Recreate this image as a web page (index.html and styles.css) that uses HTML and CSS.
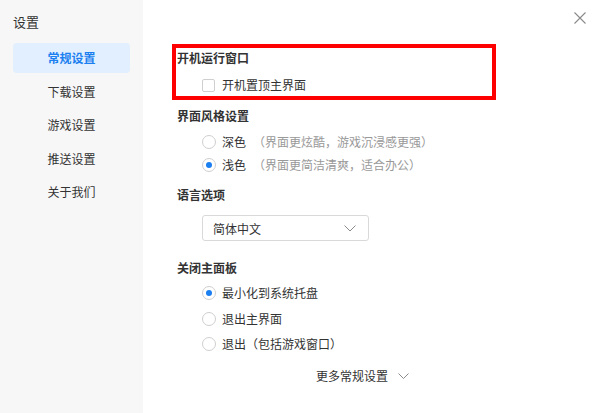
FILE: index.html
```html
<!DOCTYPE html>
<html lang="zh-CN">
  <head>
    <meta charset="UTF-8" />
    <meta name="viewport" content="width=device-width, initial-scale=1.0" />
    <title>设置</title>
    <link rel="stylesheet" href="styles.css">
  </head>
  <body>
    <aside class="sidebar">
      <h1 class="sidebar-title">设置</h1>
      <nav class="menu">
        <a class="menu-item valgt">常规设置</a>
        <a class="menu-item">下载设置</a>
        <a class="menu-item">游戏设置</a>
        <a class="menu-item">推送设置</a>
        <a class="menu-item">关于我们</a>
      </nav>
    </aside>

    <main class="content">
      <button class="close" aria-label="关闭">
        <svg width="12" height="12" viewBox="0 0 12 12">
          <path d="M0.5 0.5 L11.5 11.5 M11.5 0.5 L0.5 11.5" stroke="#8a8a8a" stroke-width="1.1" fill="none" />
        </svg>
      </button>

      <section class="group marked">
        <h2 class="group-title">开机运行窗口</h2>
        <div class="options">
          <label class="option"><span class="check"></span>开机置顶主界面</label>
        </div>
      </section>

      <section class="group">
        <h2 class="group-title">界面风格设置</h2>
        <div class="options">
          <label class="option"><span class="radio"></span>深色<span class="hint">（界面更炫酷，游戏沉浸感更强）</span></label>
          <label class="option"><span class="radio on"></span>浅色<span class="hint">（界面更简洁清爽，适合办公）</span></label>
        </div>
      </section>

      <section class="group">
        <h2 class="group-title">语言选项</h2>
        <div class="select">
          <span>简体中文</span>
          <svg width="12" height="7" viewBox="0 0 12 7">
            <path d="M0.5 0.5 L6 6 L11.5 0.5" stroke="#8c8c8c" stroke-width="1" fill="none" />
          </svg>
        </div>
      </section>

      <section class="group close-panel">
        <h2 class="group-title">关闭主面板</h2>
        <div class="options wide">
          <label class="option"><span class="radio on"></span>最小化到系统托盘</label>
          <label class="option"><span class="radio"></span>退出主界面</label>
          <label class="option"><span class="radio"></span>退出（包括游戏窗口）</label>
        </div>
      </section>

      <a class="more">更多常规设置
        <svg width="11" height="6" viewBox="0 0 11 6">
          <path d="M0.5 0.5 L5.5 5.5 L10.5 0.5" stroke="#8c8c8c" stroke-width="1" fill="none" />
        </svg>
      </a>
    </main>
  </body>
</html>
```

FILE: styles.css
```css
* {
  box-sizing: border-box;
}

body {
  margin: 0;
  height: 413px;
  display: flex;
  font-family: "Noto Sans CJK SC", "Noto Sans", sans-serif;
  font-size: 12px;
  color: #333;
  background: white;
  overflow: hidden;
}

.sidebar {
  width: 143px;
  flex-shrink: 0;
  background-color: #f7f7f7;
  padding: 12px 13px;
}

.sidebar-title {
  margin: 0 0 11px 0;
  font-size: 13px;
  font-weight: normal;
  line-height: 20px;
  color: #333;
}

.menu {
  display: flex;
  flex-direction: column;
  gap: 3.5px;
}

.menu-item {
  height: 30px;
  line-height: 30px;
  text-align: center;
  border-radius: 4px;
  color: #333;
}

.menu-item.valgt {
  background-color: #e1efff;
  color: #1b7ff0;
  font-weight: bold;
}

.content {
  position: relative;
  flex: 1;
  padding: 44px 0 0 34px;
}

.close {
  position: absolute;
  top: 12px;
  right: 14px;
  border: none;
  padding: 0;
  background: none;
  line-height: 0;
}

.group-title {
  margin: 0;
  font-size: 12px;
  font-weight: bold;
  line-height: 20px;
  color: #333;
}

.group {
  margin-bottom: 6px;
}

.marked {
  width: 324px;
  margin-left: -5px;
  border: 4px solid #ff0000;
  padding: 0 0 1px 1px;
}

.options {
  display: flex;
  flex-direction: column;
  gap: 3px;
  margin-top: 6px;
  padding-left: 25px;
}

.marked .options {
  margin-top: 7px;
}

.options.wide {
  gap: 5.5px;
  margin-top: 5px;
}

.option {
  display: flex;
  align-items: center;
  height: 20px;
  line-height: 20px;
}

.check {
  width: 13px;
  height: 13px;
  border: 1px solid #cfcfcf;
  border-radius: 2px;
  margin-right: 7px;
}

.radio {
  width: 14px;
  height: 14px;
  border: 1px solid #cfcfcf;
  border-radius: 50%;
  margin-right: 6px;
  display: flex;
  align-items: center;
  justify-content: center;
}

.radio.on::after {
  content: "";
  width: 6px;
  height: 6px;
  border-radius: 50%;
  background-color: #1b7ff0;
}

.hint {
  color: #999;
  margin-left: 7px;
}

.group:nth-of-type(2) {
  margin-bottom: 10px;
}

.group:nth-of-type(2) + .group .select {
  margin-top: 10px;
}

.select {
  width: 167px;
  height: 26px;
  margin-left: 25px;
  border: 1px solid #d9d9d9;
  border-radius: 3px;
  padding: 0 12px 0 10px;
  display: flex;
  align-items: center;
  justify-content: space-between;
}

.close-panel {
  margin-top: 17px;
  margin-bottom: 12px;
}

.more {
  display: flex;
  align-items: center;
  gap: 10px;
  margin-left: 139px;
  line-height: 20px;
  color: #333;
}
```
